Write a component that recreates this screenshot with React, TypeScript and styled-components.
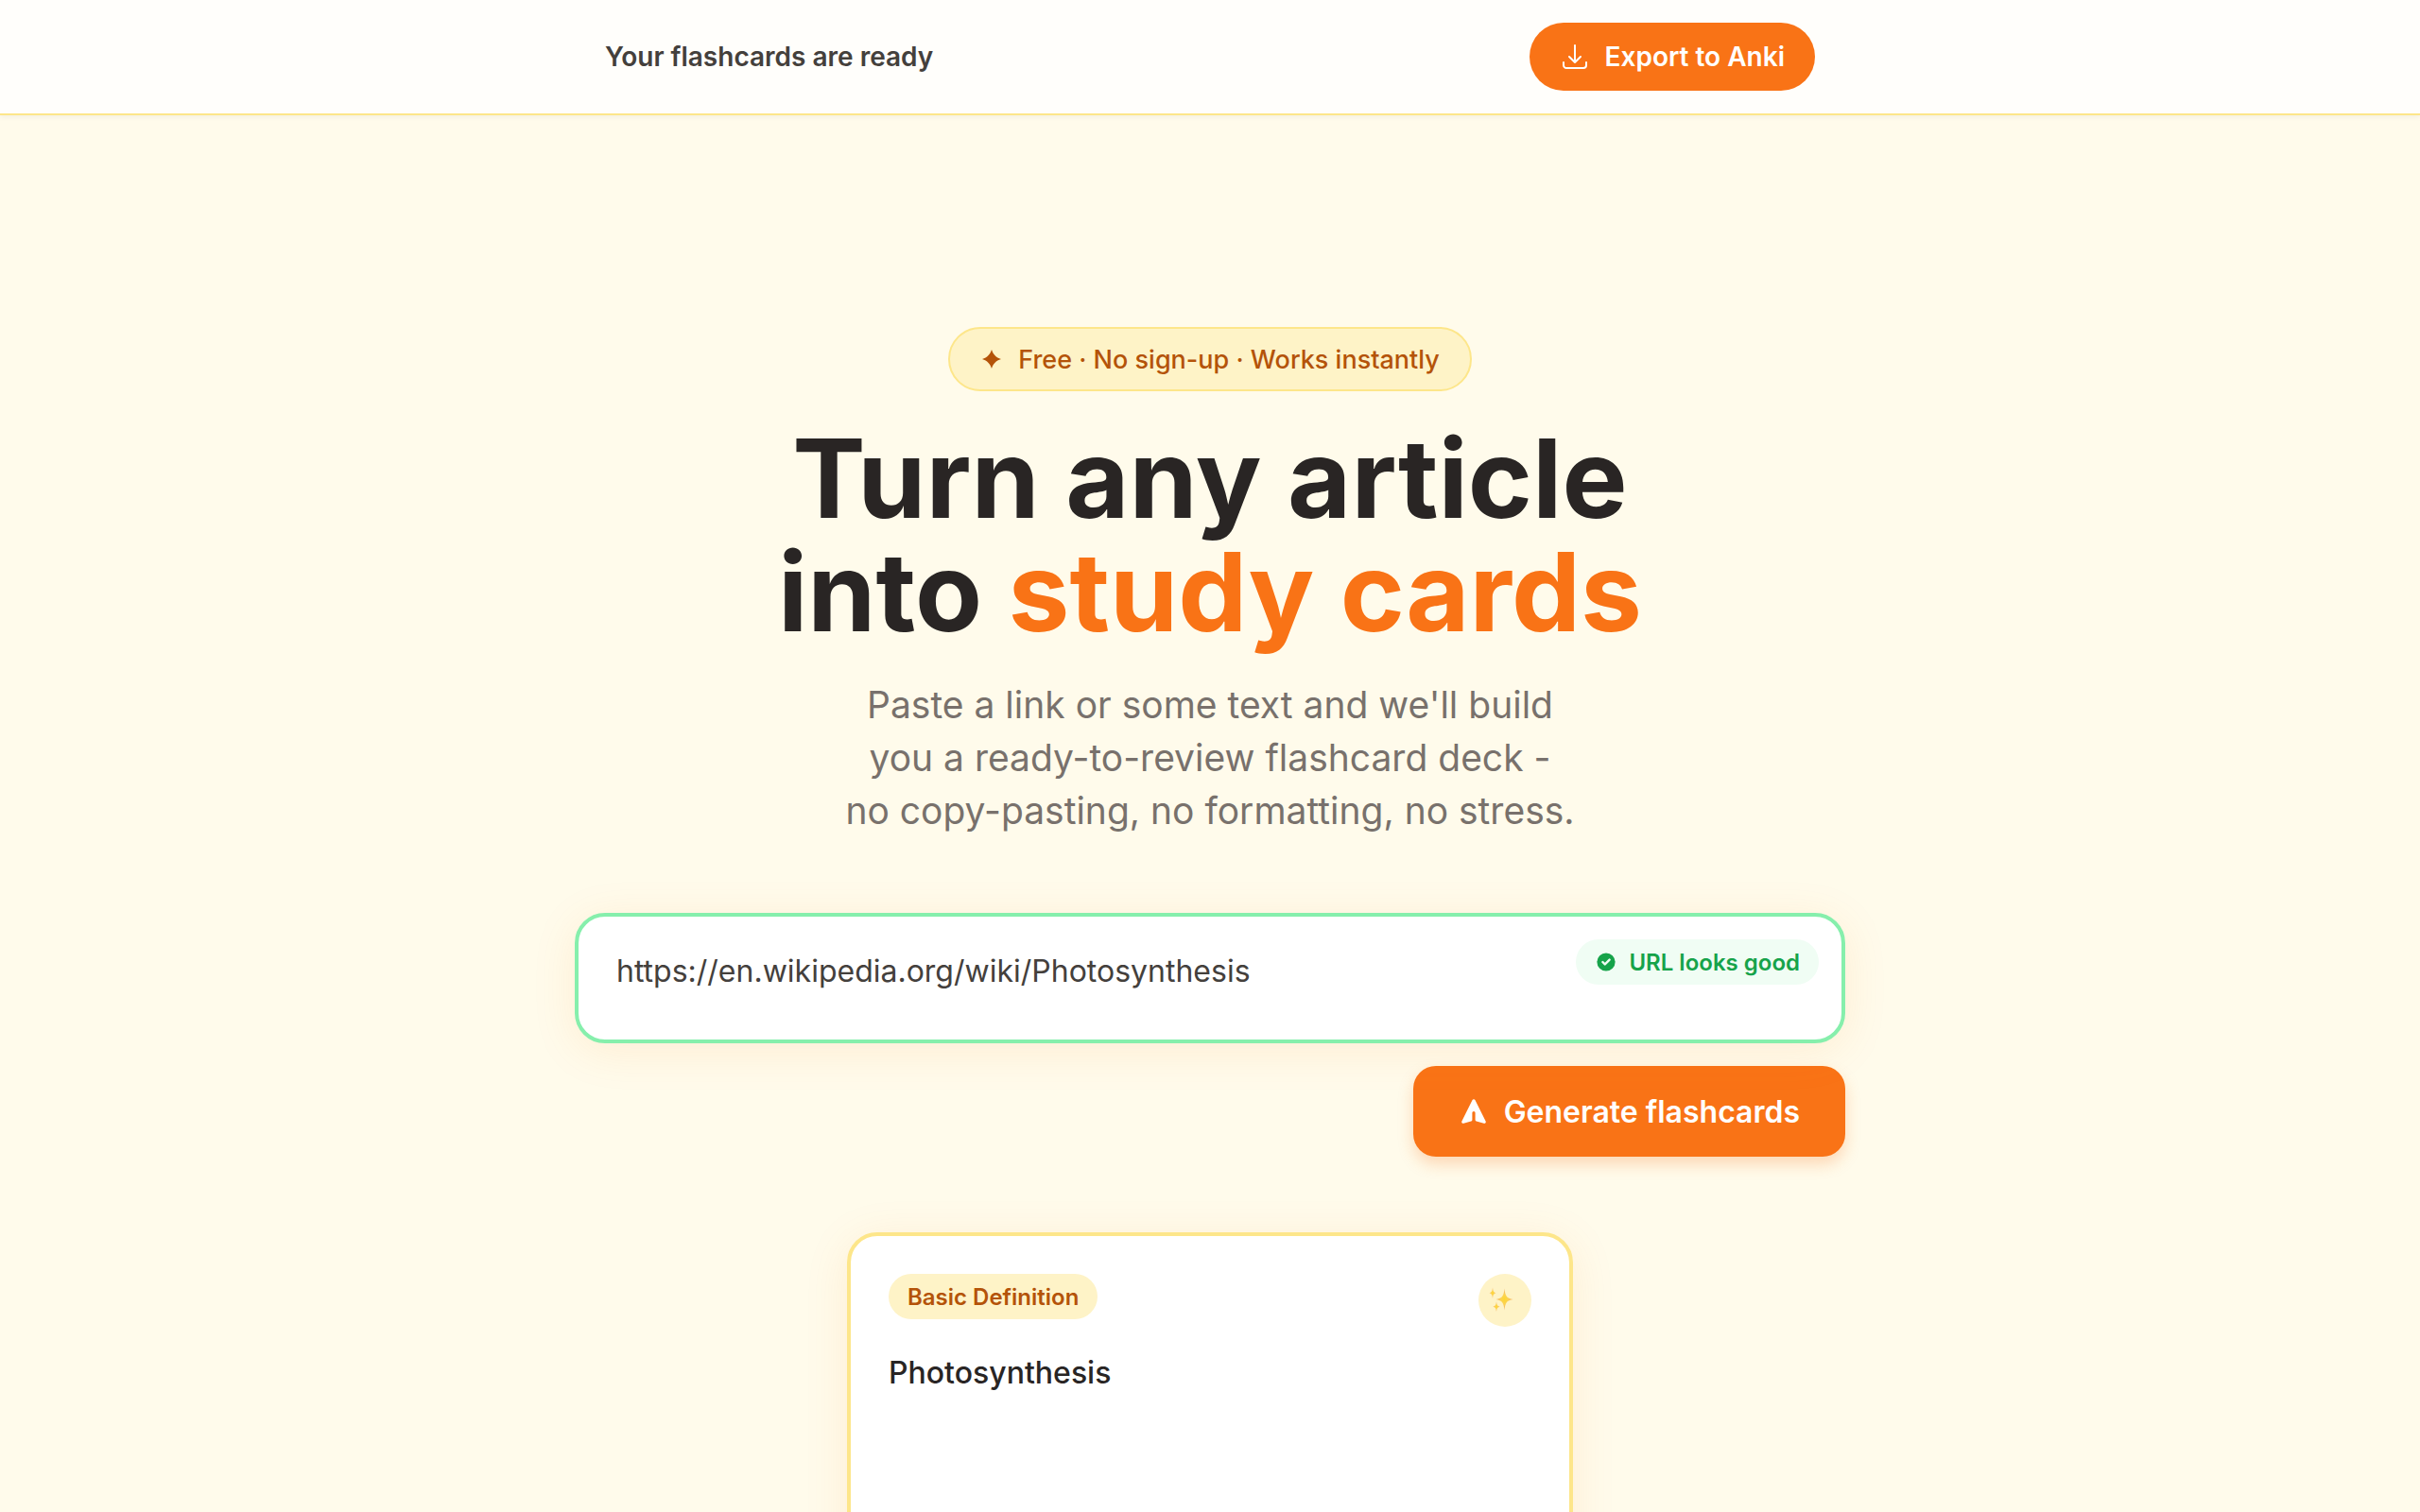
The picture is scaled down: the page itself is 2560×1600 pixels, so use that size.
import React from 'react';
import styled, { createGlobalStyle } from 'styled-components';

const GlobalStyle = createGlobalStyle`
  *, *::before, *::after { box-sizing: border-box; }
  html { background: #fffbeb; }
  body {
    margin: 0;
    background: #fffbeb;
    color: #292524;
    font-family: Inter, "Liberation Sans", sans-serif;
    -webkit-font-smoothing: antialiased;
  }
  h1, p { margin: 0; }
  button, textarea { font-family: inherit; }
`;

const Page = styled.div`
  height: 100vh;
  overflow: hidden;
  display: flex;
  flex-direction: column;
`;

const Header = styled.header`
  flex: none;
  background: #fffefb;
  border-bottom: 2px solid #fde68a;
  box-shadow: 0 2px 6px rgba(0, 0, 0, 0.05);
`;

const HeaderInner = styled.div`
  max-width: 1280px;
  margin: 0 auto;
  padding: 24px 0;
  display: flex;
  align-items: center;
  justify-content: space-between;
`;

const Status = styled.p`
  font-size: 28px;
  line-height: 40px;
  font-weight: 600;
  color: #44403c;
`;

const Button = styled.button<{ $large?: boolean }>`
  display: inline-flex;
  align-items: center;
  gap: 16px;
  border: 0;
  height: ${(p) => (p.$large ? 96 : 72)}px;
  padding: 0 ${(p) => (p.$large ? 48 : 32)}px;
  border-radius: ${(p) => (p.$large ? 24 : 36)}px;
  background: #f97316;
  color: #ffffff;
  font-size: ${(p) => (p.$large ? 32 : 28)}px;
  font-weight: 600;
  white-space: nowrap;
  cursor: pointer;
  box-shadow: ${(p) => (p.$large ? '0 8px 16px rgba(249, 115, 22, 0.25)' : 'none')};
`;

const Main = styled.main`
  flex: 1;
  width: 100%;
  max-width: 1344px;
  margin: 0 auto;
  padding-top: 224px;
  display: flex;
  flex-direction: column;
`;

const Hero = styled.section`
  display: flex;
  flex-direction: column;
  align-items: center;
  text-align: center;
`;

const Pill = styled.span`
  display: inline-flex;
  align-items: center;
  gap: 16px;
  height: 68px;
  padding: 0 32px;
  border: 2px solid #fde68a;
  border-radius: 34px;
  background: #fef3c7;
  color: #b45309;
  font-size: 27px;
  font-weight: 500;
`;

const Title = styled.h1`
  margin-top: 32px;
  font-size: 116px;
  line-height: 120px;
  font-weight: 700;
  color: #292524;
`;

const Accent = styled.span`
  color: #f97316;
`;

const Lead = styled.p`
  margin-top: 32px;
  font-size: 39px;
  line-height: 56px;
  color: #78716c;
`;

const Form = styled.form`
  margin-top: 80px;
  display: flex;
  flex-direction: column;
  align-items: flex-end;
  gap: 24px;
`;

const Field = styled.div`
  position: relative;
  width: 100%;
  display: flex;
`;

const SourceInput = styled.textarea`
  width: 100%;
  height: 138px;
  padding: 34px 40px;
  border: 4px solid #86efac;
  border-radius: 32px;
  background: #ffffff;
  color: #44403c;
  font-size: 32px;
  line-height: 48px;
  resize: none;
  outline: none;
  overflow: hidden;
  box-shadow: 0 8px 48px rgba(249, 115, 22, 0.1);
`;

const Chip = styled.span<{ $tone: 'green' | 'amber' }>`
  display: inline-flex;
  align-items: center;
  gap: 12px;
  height: 48px;
  padding: 0 20px;
  border-radius: 24px;
  background: ${(p) => (p.$tone === 'green' ? '#f0fdf4' : '#fef3c7')};
  color: ${(p) => (p.$tone === 'green' ? '#16a34a' : '#b45309')};
  font-size: 24px;
  font-weight: 600;
  white-space: nowrap;
`;

const FieldStatus = styled.div`
  position: absolute;
  top: 28px;
  right: 28px;
`;

const Card = styled.article`
  align-self: center;
  width: 768px;
  max-width: 100%;
  min-height: 560px;
  margin-top: 80px;
  padding: 40px;
  border: 4px solid #fde68a;
  border-radius: 32px;
  background: #ffffff;
  box-shadow: 0 8px 48px rgba(249, 115, 22, 0.1);
`;

const CardTop = styled.div`
  display: flex;
  align-items: flex-start;
  justify-content: space-between;
`;

const Spark = styled.span`
  width: 56px;
  height: 56px;
  border-radius: 50%;
  background: #fef3c7;
`;

const Term = styled.p`
  margin-top: 24px;
  font-size: 32px;
  line-height: 50px;
  font-weight: 500;
`;

const DownloadIcon = () => (
  <svg width="32" height="32" viewBox="0 0 24 24" fill="none" stroke="#fff" strokeWidth="1.5" strokeLinecap="round" strokeLinejoin="round" aria-hidden="true">
    <path d="M3 16.5v2.25A2.25 2.25 0 0 0 5.25 21h13.5A2.25 2.25 0 0 0 21 18.75V16.5M16.5 12 12 16.5m0 0L7.5 12m4.5 4.5V3" />
  </svg>
);

const StarIcon = () => (
  <svg width="24" height="24" viewBox="0 0 24 24" fill="#b45309" aria-hidden="true">
    <path d="M12 2C14 7.600 16.400 10 22 12 16.400 14 14 16.400 12 22 10 16.400 7.600 14 2 12 7.600 10 10 7.600 12 2Z" />
  </svg>
);

const CheckIcon = () => (
  <svg width="24" height="24" viewBox="0 0 20 20" fill="#16a34a" aria-hidden="true">
    <path
      fillRule="evenodd"
      clipRule="evenodd"
      d="M10 18a8 8 0 1 0 0-16 8 8 0 0 0 0 16zm3.707-9.293a1 1 0 0 0-1.414-1.414L9 10.586 7.707 9.293a1 1 0 0 0-1.414 1.414l2 2a1 1 0 0 0 1.414 0l4-4z"
    />
  </svg>
);

const LaunchIcon = () => (
  <svg width="32" height="32" viewBox="0 0 20 20" fill="#fff" aria-hidden="true">
    <path d="M10.894 2.553a1 1 0 0 0-1.788 0l-7 14a1 1 0 0 0 1.169 1.409l5-1.429A1 1 0 0 0 9 15.571V11a1 1 0 1 1 2 0v4.571a1 1 0 0 0 .725.962l5 1.428a1 1 0 0 0 1.17-1.408l-7-14z" />
  </svg>
);

const SparklesIcon = () => (
  <svg width="56" height="56" viewBox="0 0 56 56" aria-hidden="true">
    <defs>
      <radialGradient id="spark">
        <stop offset="0" stopColor="#fdd421" />
        <stop offset="0.4" stopColor="#fcd045" />
        <stop offset="1" stopColor="#f3a765" />
      </radialGradient>
    </defs>
    <g fill="url(#spark)" opacity="0.9">
      <path d="M27.500 15.500c.8 8 2.300 10.200 9 11.500-6.700 1.300-8.200 3.500-9 11.500-.8-8-2.300-10.200-9-11.500 6.700-1.300 8.200-3.500 9-11.500Z" />
      <path d="M15 14.500c.4 3.700 1 4.900 3.500 5.700-2.500.8-3.100 2-3.500 5.700-.4-3.700-1-4.900-3.500-5.700 2.500-.8 3.100-2 3.500-5.700Z" />
      <path d="M19 29.300c.4 3.500 1 4.700 3.500 5.400-2.500.7-3.100 1.900-3.500 5.400-.4-3.500-1-4.700-3.500-5.400 2.500-.7 3.100-1.900 3.500-5.400Z" />
    </g>
  </svg>
);

export default function App() {
  return (
    <Page>
      <GlobalStyle />
      <Header>
        <HeaderInner>
          <Status>Your flashcards are ready</Status>
          <Button type="button">
            <DownloadIcon />
            Export to Anki
          </Button>
        </HeaderInner>
      </Header>
      <Main>
        <Hero>
          <Pill>
            <StarIcon />
            Free · No sign-up · Works instantly
          </Pill>
          <Title>
            Turn any article
            <br />
            into <Accent>study cards</Accent>
          </Title>
          <Lead>
            Paste a link or some text and we'll build
            <br />
            you a ready-to-review flashcard deck -
            <br />
            no copy-pasting, no formatting, no stress.
          </Lead>
        </Hero>
        <Form onSubmit={(e) => e.preventDefault()}>
          <Field>
            <SourceInput
              aria-label="Article link or text"
              rows={1}
              spellCheck={false}
              defaultValue="https://en.wikipedia.org/wiki/Photosynthesis"
            />
            <FieldStatus>
              <Chip $tone="green">
                <CheckIcon />
                URL looks good
              </Chip>
            </FieldStatus>
          </Field>
          <Button type="submit" $large>
            <LaunchIcon />
            Generate flashcards
          </Button>
        </Form>
        <Card>
          <CardTop>
            <Chip $tone="amber">Basic Definition</Chip>
            <Spark>
              <SparklesIcon />
            </Spark>
          </CardTop>
          <Term>Photosynthesis</Term>
        </Card>
      </Main>
    </Page>
  );
}
